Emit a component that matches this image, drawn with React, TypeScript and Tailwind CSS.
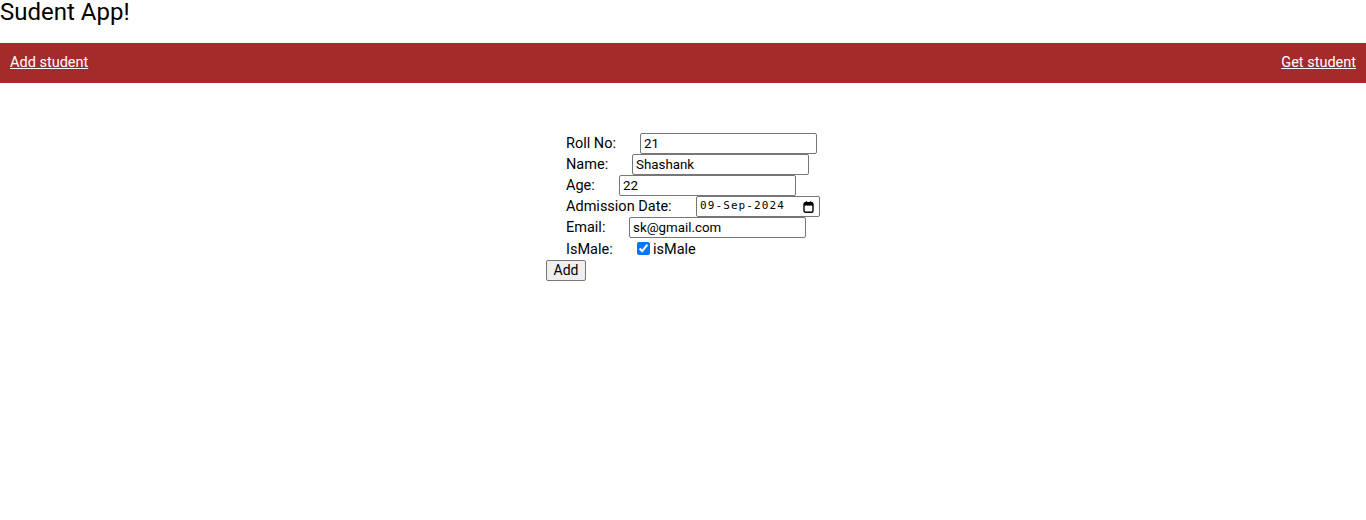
import React from "react";

const rows = [
  { label: "Roll No:", value: "21", w: "w-[74px]" },
  { label: "Name:", value: "Shashank", w: "w-[66px]" },
  { label: "Age:", value: "22", w: "w-[53px]" },
];

function CalendarIcon() {
  return (
    <svg width="11" height="12" viewBox="0 0 11 12" className="shrink-0">
      <rect x="1" y="1.8" width="9" height="9.5" rx="1.5" fill="none" stroke="#000" strokeWidth="1.4" />
      <rect x="1" y="1.8" width="9" height="2.8" fill="#000" />
      <rect x="2.8" y="0.3" width="1.4" height="2.5" fill="#000" />
      <rect x="6.8" y="0.3" width="1.4" height="2.5" fill="#000" />
    </svg>
  );
}

const inputCls =
  "h-[21px] w-[177px] rounded-[2px] border border-[#767676] bg-white px-[3px] text-[13.33px] text-black outline-none";

export default function App() {
  return (
    <div className="min-h-[520px] bg-white text-black font-['Roboto',sans-serif]">
      <div className="h-[43px] text-[24px] leading-[24px]">Sudent App!</div>

      <nav className="flex h-[40px] items-center justify-between bg-[#a52a2a] px-[10px] text-[14.5px]">
        <a href="#" className="text-white underline">Add student</a>
        <a href="#" className="text-white underline">Get student</a>
      </nav>

      <div className="flex justify-center pt-[50px]">
        <form className="flex flex-col" onSubmit={(e) => e.preventDefault()}>
          <ul className="pl-[20px] text-[14.5px]">
            {rows.map((r) => (
              <li key={r.label} className="flex h-[21px] items-center">
                <label className={r.w}>{r.label}</label>
                <input className={inputCls} defaultValue={r.value} />
              </li>
            ))}
            <li className="flex h-[21px] items-center">
              <label className="w-[130px]">Admission Date:</label>
              <div className="flex h-[21px] w-[124px] items-center justify-between rounded-[2px] border border-[#767676] bg-white pl-[3px] pr-[5px]">
                <span className="font-['DejaVu_Sans_Mono',monospace] text-[11px] tracking-[1.1px]">
                  09-Sep-2024
                </span>
                <CalendarIcon />
              </div>
            </li>
            <li className="flex h-[21px] items-center">
              <label className="w-[63px]">Email:</label>
              <input className={inputCls} defaultValue="sk@gmail.com" />
            </li>
            <li className="flex h-[20px] items-center">
              <label className="w-[71px] pt-[4px]">IsMale:</label>
              <input type="checkbox" defaultChecked className="m-0 mr-[3px] h-[13px] w-[13px]" />
              <span className="pt-[4px]">isMale</span>
            </li>
          </ul>
          <div>
            <button
              type="submit"
              className="h-[21px] w-[40px] rounded-[2px] border border-[#767676] bg-[#efefef] text-[14px] leading-[18px]"
            >
              Add
            </button>
          </div>
        </form>
      </div>
    </div>
  );
}
